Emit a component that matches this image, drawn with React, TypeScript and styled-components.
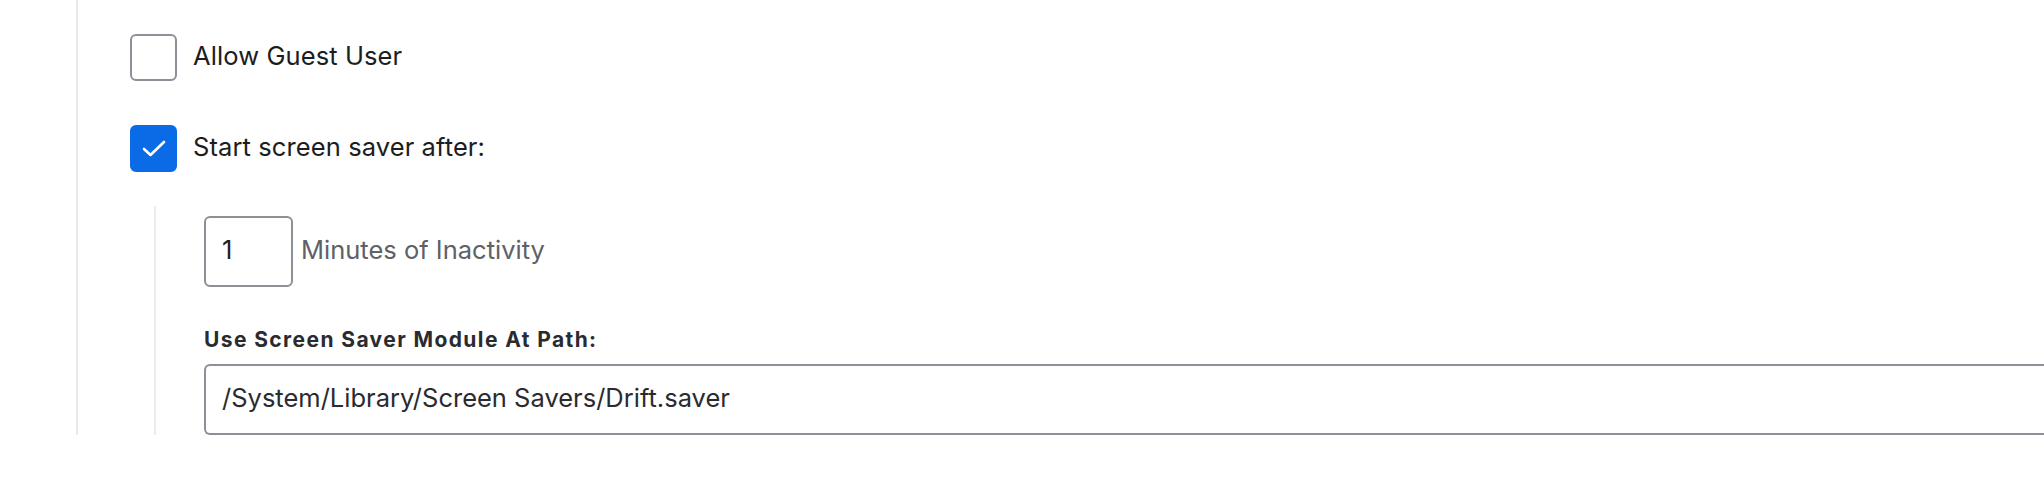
import React from "react";
import styled, { createGlobalStyle } from "styled-components";

const GlobalStyle = createGlobalStyle`
  html, body {
    margin: 0;
    padding: 0;
    background: #ffffff;
  }
  body {
    font-family: Inter, "Liberation Sans", sans-serif;
    color: #1c1d21;
  }
`;

const Section = styled.div`
  margin-left: 76px;
  border-left: 2px solid #e8e9ed;
  padding: 34px 0 0 52px;
`;

const CheckRow = styled.label`
  display: flex;
  align-items: center;
  gap: 16px;
  height: 47px;
  margin-bottom: 44px;
  cursor: pointer;
  &:last-of-type {
    margin-bottom: 0;
  }
`;

const Box = styled.span<{ checked?: boolean }>`
  box-sizing: border-box;
  width: 47px;
  height: 47px;
  flex: none;
  border-radius: 6px;
  display: flex;
  align-items: center;
  justify-content: center;
  border: 2px solid ${({ checked }) => (checked ? "#0b6be6" : "#8e9097")};
  background: ${({ checked }) => (checked ? "#0b6be6" : "#ffffff")};
`;

const Label = styled.span`
  font-size: 25.5px;
  letter-spacing: 0.1px;
  color: #1c1d21;
  padding-bottom: 5px;
`;

const SubSection = styled.div`
  margin: 34px 0 0 24px;
  border-left: 2px solid #ececef;
  padding: 10px 0 0 48px;
`;

const MinutesRow = styled.div`
  display: flex;
  align-items: center;
  gap: 8px;
`;

const NumberInput = styled.input`
  box-sizing: border-box;
  width: 89px;
  height: 71px;
  border: 2px solid #8e9097;
  border-radius: 6px;
  padding: 0 16px 4px;
  font-family: inherit;
  font-size: 25.5px;
  color: #1c1d21;
  outline: none;
`;

const Hint = styled.span`
  font-size: 25.5px;
  color: #5e6167;
  padding-bottom: 5px;
`;

const FieldLabel = styled.div`
  font-size: 21px;
  font-weight: 700;
  letter-spacing: 1.4px;
  color: #2a2b2f;
  margin: 40px 0 12px;
`;

const PathInput = styled.input`
  box-sizing: border-box;
  display: block;
  width: calc(100% + 20px);
  height: 71px;
  border: 2px solid #8e9097;
  border-right: none;
  border-radius: 6px 0 0 6px;
  padding: 0 16px 4px;
  font-family: inherit;
  font-size: 25.5px;
  color: #2a2b2f;
  outline: none;
`;

const Check = () => (
  <svg width="24" height="17" viewBox="0 0 24 17" fill="none">
    <path d="M2 9 L8.5 15 L22 2" stroke="#ffffff" strokeWidth="2.6" strokeLinecap="round" strokeLinejoin="round" />
  </svg>
);

export default function App() {
  return (
    <>
      <GlobalStyle />
      <Section>
        <CheckRow>
          <Box />
          <Label>Allow Guest User</Label>
        </CheckRow>
        <CheckRow>
          <Box checked>
            <Check />
          </Box>
          <Label>Start screen saver after:</Label>
        </CheckRow>
        <SubSection>
          <MinutesRow>
            <NumberInput defaultValue="1" />
            <Hint>Minutes of Inactivity</Hint>
          </MinutesRow>
          <FieldLabel>Use Screen Saver Module At Path:</FieldLabel>
          <PathInput defaultValue="/System/Library/Screen Savers/Drift.saver" />
        </SubSection>
      </Section>
    </>
  );
}
